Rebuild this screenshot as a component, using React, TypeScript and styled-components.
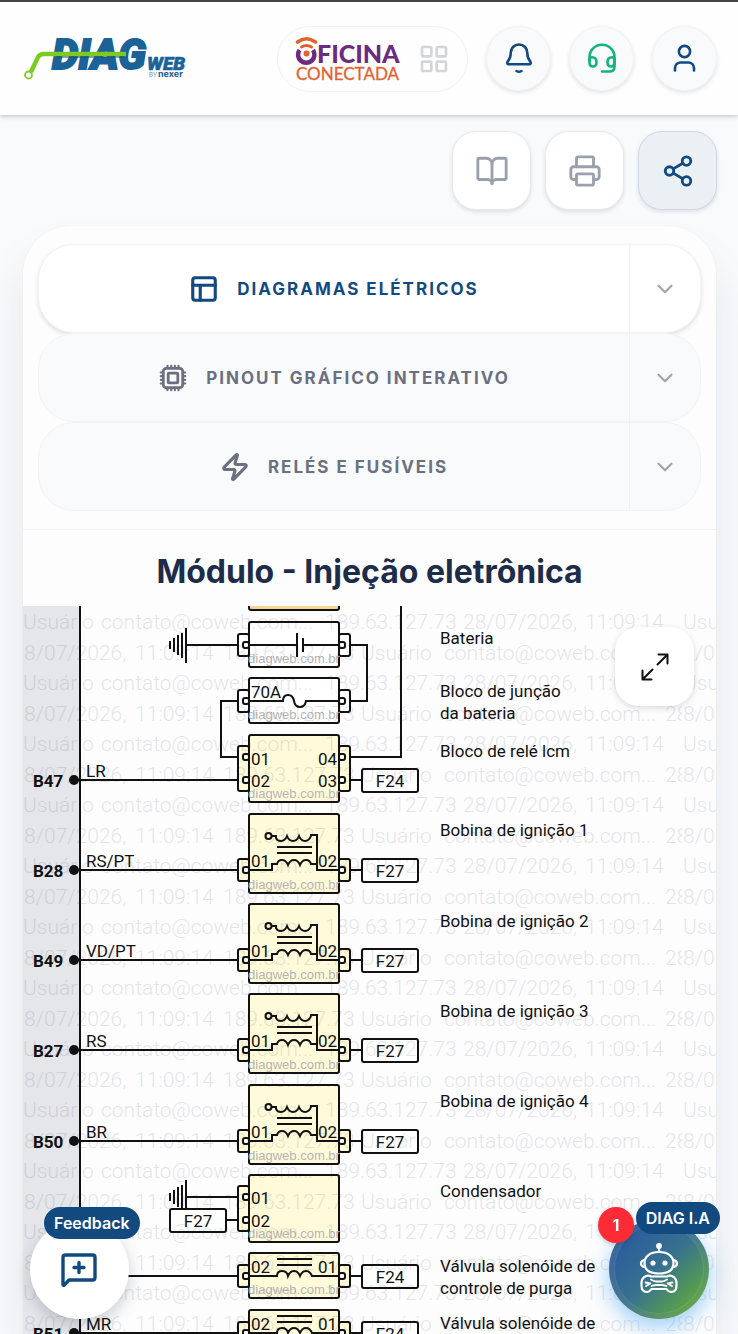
import React from "react";
import styled, { createGlobalStyle, css } from "styled-components";
import { BookOpen, ChevronDown, LayoutGrid, PanelsTopLeft, Printer, Share2, Zap } from "lucide-react";

const navy = "#124a80";
const ui = `Inter, "Open Sans", sans-serif`;

const GlobalStyle = createGlobalStyle`
  * { box-sizing: border-box; }
  body { margin: 0; background: #f8fafc; font-family: ${ui}; }
  button { font: inherit; color: inherit; padding: 0; cursor: pointer; }
`;

const Page = styled.div`
  display: flex;
  flex-direction: column;
  height: 100vh;
  overflow: hidden;
  border-top: 2px solid #45434b;
`;

const Header = styled.header`
  display: flex;
  align-items: center;
  justify-content: space-between;
  flex: none;
  height: 113px;
  padding: 0 21px 0 24px;
  background: #fefefe;
  box-shadow: 0 2px 4px rgba(0, 0, 0, 0.18);
`;

const HomeLink = styled.a`
  display: block;
  height: 44px;
`;

const HeaderActions = styled.div`
  display: flex;
  align-items: center;
  gap: 18px;
`;

const BrandPill = styled.button`
  display: flex;
  align-items: center;
  gap: 17px;
  height: 66px;
  padding: 0 17px;
  border: 1px solid #f1f2f5;
  border-radius: 33px;
  background: #fefefe;
`;

const RoundButton = styled.button<{ $tone: string }>`
  display: grid;
  place-items: center;
  width: 65px;
  height: 65px;
  border: 1px solid #f1f3f6;
  border-radius: 50%;
  background: #f8fafc;
  color: ${(p) => p.$tone};
  box-shadow: 0 2px 4px rgba(30, 41, 59, 0.12);
`;

const Toolbar = styled.div`
  display: flex;
  justify-content: flex-end;
  gap: 14px;
  flex: none;
  padding: 16px 21px;
`;

const ToolButton = styled.button<{ $active?: boolean }>`
  display: grid;
  place-items: center;
  width: 79px;
  height: 79px;
  border: 1px solid #e7e9ee;
  border-radius: 24px;
  background: #fff;
  color: #9aa0ae;
  box-shadow: 0 2px 4px rgba(30, 41, 59, 0.12);
  ${(p) =>
    p.$active &&
    css`
      border-color: #cdd9e4;
      background: #ebf0f5;
      color: ${navy};
    `}
`;

const Card = styled.main`
  display: flex;
  flex-direction: column;
  flex: 1;
  min-height: 0;
  margin: 0 22px 0 23px;
  border-radius: 48px 48px 0 0;
  background: #fdfdfe;
  box-shadow: 0 32px 48px rgba(30, 41, 59, 0.09), 0 0 2px rgba(30, 41, 59, 0.06);
`;

const Tabs = styled.nav`
  display: flex;
  flex-direction: column;
  flex: none;
  padding: 18px 15px;
  border-bottom: 1px solid #eff1f4;
`;

const TabRow = styled.div<{ $active?: boolean }>`
  display: flex;
  height: 89px;
  border: 1px solid #f1f3f6;
  border-radius: 36px;
  background: #f9fafc;
  color: #6b7080;
  ${(p) =>
    p.$active &&
    css`
      background: #fff;
      color: ${navy};
      box-shadow: 0 2px 4px rgba(30, 41, 59, 0.14);
    `}
`;

const TabButton = styled.button`
  display: flex;
  flex: 1;
  align-items: center;
  justify-content: center;
  gap: 18px;
  border: 0;
  background: none;
  font-size: 17px;
  font-weight: 700;
  letter-spacing: 2px;
`;

const TabToggle = styled.button`
  display: grid;
  place-items: center;
  width: 71px;
  border: 0;
  border-left: 1px solid #f0f2f5;
  background: none;
  color: #a0a4b0;
`;

const Title = styled.h1`
  flex: none;
  margin: 0;
  padding: 22px 0 14px;
  color: #1c2c49;
  font-size: 32px;
  line-height: 40px;
  font-weight: 700;
  text-align: center;
`;

const Viewport = styled.section`
  position: relative;
  flex: 1;
  min-height: 0;
  overflow: hidden;
`;

const DiagramSvg = styled.svg`
  display: block;
  width: 100%;
  font-family: Roboto, sans-serif;
  font-size: 17px;
  fill: #111;
`;

const ExpandButton = styled.button`
  position: absolute;
  top: 21px;
  right: 22px;
  display: grid;
  place-items: center;
  width: 79px;
  height: 79px;
  border: 0;
  border-radius: 24px;
  background: #fff;
  color: #111;
  box-shadow: 0 2px 6px rgba(30, 41, 59, 0.16);
`;

const Floating = styled.div<{ $side: "left" | "right" }>`
  position: fixed;
  bottom: 15px;
  ${(p) => (p.$side === "left" ? "left: 30px;" : "right: 29px;")}
`;

const FeedbackButton = styled.button`
  display: grid;
  place-items: center;
  width: 99px;
  height: 99px;
  border: 0;
  border-radius: 50%;
  background: #fff;
  color: ${navy};
  box-shadow: 0 6px 16px rgba(30, 41, 59, 0.22);
`;

const AssistantButton = styled.button`
  display: grid;
  place-items: center;
  width: 100px;
  height: 100px;
  border: 0;
  border-radius: 50%;
  background: linear-gradient(135deg, #2c5f9c 20%, #37718f 50%, #5da640 85%);
  color: #fff;
  box-shadow: 0 8px 22px rgba(56, 160, 240, 0.5), inset 0 0 0 5px rgba(20, 60, 80, 0.1), inset 0 0 0 6px rgba(255, 255, 255, 0.1);
`;

const Tag = styled.span<{ $side: "left" | "right" }>`
  position: absolute;
  height: 32px;
  padding: 0 10px;
  border-radius: 16px;
  background: ${navy};
  color: #fff;
  font-size: 16px;
  line-height: 32px;
  font-weight: 600;
  white-space: nowrap;
  ${(p) => (p.$side === "left" ? "left: 14px; top: -13px;" : "right: -11px; top: -17px;")}
`;

const Count = styled.span`
  position: absolute;
  left: -11px;
  top: -12px;
  width: 36px;
  height: 36px;
  border-radius: 50%;
  background: #fb2c36;
  color: #fff;
  font-size: 16px;
  line-height: 36px;
  font-weight: 700;
  text-align: center;
  box-shadow: 0 2px 4px rgba(30, 41, 59, 0.2);
`;

const stroke = { fill: "none", stroke: "currentColor", strokeLinecap: "round", strokeLinejoin: "round" } as const;

const DiagLogo = () => (
  <svg width="166" height="44" viewBox="24 36 166 44" role="img" aria-label="DIAGweb by nexer">
    <g fill="#1b6299" stroke="#1b6299" fontFamily="Roboto, sans-serif" fontStyle="italic" fontWeight="900">
      <text x="52" y="68" fontSize="42" strokeWidth="1.800">DIAG</text>
      <text x="147" y="69" fontSize="19" strokeWidth="0.600">WEB</text>
    </g>
    <path d="M31 71 L38 56 Q40 53 44 53 H126" fill="none" stroke="#7ccb22" strokeWidth="4.500" />
    <path d="M56 56 H124" stroke="#1a4f6b" strokeWidth="1" />
    <circle cx="28.500" cy="74" r="3.500" fill="#fff" stroke="#7ccb22" strokeWidth="1.800" />
    <text x="149" y="76" fontSize="6" fontFamily="Inter, sans-serif" fill="#6d8fa8">BY</text>
    <text x="158" y="76" fontSize="9" fontFamily="Inter, sans-serif" fontWeight="700" fill="#1b5a8c">nexer</text>
  </svg>
);

const OficinaLogo = () => (
  <svg width="106" height="48" viewBox="295 34 106 48" role="img" aria-label="Oficina Conectada">
    <g fill="none" strokeWidth="4">
      <path d="M299.500 49 A8.200 8.200 0 1 0 313 49" stroke="#6c2a80" strokeWidth="4.500" />
      <path d="M297.500 41 Q306.500 34.500 315.500 41" stroke="#e2622e" strokeWidth="3.600" strokeLinecap="round" />
      <path d="M301.500 46 Q306.500 43 311.500 46" stroke="#e2622e" strokeWidth="3" strokeLinecap="round" />
    </g>
    <circle cx="306.500" cy="52.500" r="3" fill="#e2622e" />
    <text x="317" y="62" fontFamily="Lato, sans-serif" fontSize="25" fontWeight="900" fill="#6c2a80">FICINA</text>
    <text x="296" y="79" fontFamily="Lato, sans-serif" fontSize="17" fill="#e2622e" stroke="#e2622e" strokeWidth="0.300">CONECTADA</text>
  </svg>
);

const BellIcon = () => (
  <svg width="34" height="34" viewBox="502 41 34 34" {...stroke} strokeWidth="2.600">
    <path d="M519 43.500c-5 0-8.300 3.800-8.300 8.600 0 4.600-1.400 6.700-3 8.500-.8 1-.4 2.700.9 2.700h20.800c1.300 0 1.700-1.700.9-2.700-1.600-1.800-3-3.900-3-8.500 0-4.800-3.300-8.600-8.300-8.600Z" />
    <path d="M516.500 70q2.500 1.600 5 0" />
  </svg>
);

const HeadsetIcon = () => (
  <svg width="34" height="34" viewBox="585 41 34 34" {...stroke} strokeWidth="2.600">
    <path d="M589.500 60v-4.200a12.500 12 0 0 1 25 0V65.500q0 5-5 5H602" />
    <path d="M589.500 58.500q0-2.200 2.400-2.200 4.600 0 4.600 4.700 0 4.500-3.500 4.500t-3.500-4Z" />
    <path d="M614.500 58.500q0-2.200-2.400-2.200-4.600 0-4.600 4.700 0 4.500 3.500 4.500t3.500-4Z" />
  </svg>
);

const UserIcon = () => (
  <svg width="34" height="34" viewBox="668 41 34 34" {...stroke} strokeWidth="2.600">
    <circle cx="684.500" cy="50.500" r="5.600" />
    <path d="M675 69.500v-2.500a5.500 5.500 0 0 1 5.500-5.500h8a5.500 5.500 0 0 1 5.500 5.500v2.500" />
  </svg>
);

const ChipIcon = () => (
  <svg width="30" height="30" viewBox="0 0 30 30" {...stroke} strokeWidth="2.800">
    <rect x="5.300" y="5.300" width="19.400" height="19.400" rx="3" />
    <rect x="10.200" y="10.200" width="9.600" height="9.600" rx="0.800" />
    <path strokeWidth="2.200" d="M9.500 2.800v2M13.200 2.800v2M16.800 2.800v2M20.500 2.800v2M9.500 25.200v2M13.200 25.200v2M16.800 25.200v2M20.500 25.200v2M2.800 9.500h2M2.800 13.200h2M2.800 16.800h2M2.800 20.500h2M25.200 9.500h2M25.200 13.200h2M25.200 16.800h2M25.200 20.500h2" />
  </svg>
);

const ExpandIcon = () => (
  <svg width="30" height="30" viewBox="0 0 30 30" {...stroke} strokeWidth="2">
    <path d="M17.500 12.500 27.500 2.500M18.500 2.500h9v9M12.500 17.500 2.500 27.500M2.500 18.500v9h9" />
  </svg>
);

const CommentIcon = () => (
  <svg width="40" height="40" viewBox="60 1250 40 40" {...stroke} strokeWidth="3.400">
    <path d="M63 1284.500v-27q0-2.500 2.500-2.500h27q2.500 0 2.500 2.500v20q0 2.500-2.500 2.500H69l-4.500 4.800q-1.500 1.200-1.500-.300Z" />
    <path d="M79 1262.500v10M74 1267.500h10" />
  </svg>
);

const RobotIcon = () => (
  <svg width="44" height="54" viewBox="637 1242 44 54" {...stroke} strokeWidth="2.200">
    <circle cx="659" cy="1246" r="1.800" fill="currentColor" />
    <path d="M659 1247v5" />
    <path d="M659 1252c-9 0-14.500 4.500-14.500 11s5 10.500 14.500 10.500 14.500-4 14.500-10.500-5.500-11-14.500-11Z" />
    <path d="M644 1260q-3 1-3 3.500t3 3.500M674 1260q3 1 3 3.500t-3 3.500" />
    <circle cx="653" cy="1263" r="1.500" fill="currentColor" />
    <circle cx="665" cy="1263" r="1.500" fill="currentColor" />
    <path d="M646 1276q-5 2-4.500 9 0 7 5 7 3 0 5-3h15q2 3 5 3 5 0 5-7 .500-7-4.500-9-3-1-5 .500h-16q-2-1.500-5-.500Z" />
    <path d="M651 1279.500q3 2 5 2h6q2 0 5-2M651.500 1286q3-1 5-1h5q2 0 5 1" strokeWidth="1.800" />
    <path d="M645.500 1282.500l5 1-4.500 2.500M672.500 1282.500l-5 1 4.500 2.500" strokeWidth="1.800" />
  </svg>
);

/* ---------- wiring diagram ---------- */

const cream = "#fffad9";
const L = 249;
const R = 339;
const wire = { fill: "none", stroke: "#111", strokeWidth: 2 } as const;

const Pin = ({ y, side }: { y: number; side: "l" | "r" }) => (
  <rect x={side === "l" ? L - 6 : R} y={y - 3} width="6" height="6" rx="2" fill="#fff" stroke="#111" strokeWidth="2" />
);

type BlockProps = { top: number; bottom: number; fill?: string; left?: number[]; right?: number[] };

const Block = ({ top, bottom, fill = "#fff", left = [], right = [] }: BlockProps) => (
  <g>
    {left.length > 0 && (
      <rect {...wire} fill={fill} x={L - 11} y={left[0] - 11} width="11" height={left[left.length - 1] - left[0] + 22} rx="2" />
    )}
    {right.length > 0 && (
      <rect {...wire} fill={fill} x={R} y={right[0] - 11} width="11" height={right[right.length - 1] - right[0] + 22} rx="2" />
    )}
    <rect {...wire} fill={fill} x={L} y={top} width={R - L} height={bottom - top} rx="2" />
    {left.map((y) => <Pin key={y} y={y} side="l" />)}
    {right.map((y) => <Pin key={y} y={y} side="r" />)}
    <text x={(L + R) / 2} y={bottom - 4} textAnchor="middle" fontFamily="Liberation Sans, sans-serif" fontSize="13" fill="#b5b5b5">
      diagweb.com.br
    </text>
  </g>
);

const Fuse = ({ x, y, name }: { x: number; y: number; name: string }) => (
  <g>
    <rect {...wire} fill="#fff" x={x} y={y - 11} width="56" height="23" rx="2" />
    <text x={x + 28} y={y + 7} textAnchor="middle">{name}</text>
  </g>
);

const Ground = ({ y }: { y: number }) => (
  <path {...wire} d={`M238 ${y}H186M186 ${y - 17}v35M182 ${y - 12}v25M178 ${y - 10}v20M174 ${y - 7}v14M170 ${y - 4}v8`} />
);

const Terminal = ({ y, name, color }: { y: number; name?: string; color?: string }) => (
  <g>
    <path {...wire} d={`M74 ${y}H238`} />
    <circle cx="74" cy={y} r="5" />
    {name && <text x="33" y={y + 7} fontWeight="700">{name}</text>}
    {color && <text x="86" y={y - 3}>{color}</text>}
  </g>
);

const PinLabels = ({ y, left, right }: { y: number; left?: string; right?: string }) => (
  <g>
    {left && <text x={L + 2} y={y}>{left}</text>}
    {right && <text x={R - 2} y={y} textAnchor="end">{right}</text>}
  </g>
);

const IgnitionCoil = ({ y, name, color }: { y: number; name: string; color: string }) => (
  <g>
    <Terminal y={y} name={name} color={color} />
    <Block top={y - 56} bottom={y + 23} fill={cream} left={[y]} right={[y]} />
    <g {...wire}>
      <circle cx="268.500" cy={y - 34} r="3" />
      <path d={`M271 ${y - 34}h5v2q1 3 5 3t6-5q2 5 6 5t6-5q2 5 6 5t6-5v-1h6V${y}H${R}`} />
      <path d={`M277 ${y - 23}h35M277 ${y - 17}h35`} />
      <path d={`M249 ${y}h23v-6h5q1-4 5-4t6 5q2-5 6-5t6 5q2-5 6-5t5 4h6`} />
    </g>
    <PinLabels y={y - 3} left="01" right="02" />
    <path {...wire} d={`M350 ${y}h12`} />
    <Fuse x={362} y={y} name="F27" />
  </g>
);

const Solenoid = ({ y, name, color }: { y: number; name?: string; color?: string }) => (
  <g>
    <Terminal y={y} name={name} color={color} />
    <Block top={y - 23} bottom={y + 22} fill={cream} left={[y]} right={[y]} />
    <g {...wire}>
      <path d={`M277 ${y - 17}h35M277 ${y - 11}h35`} />
      <path d={`M249 ${y}h28q0-5 5-5t6 5q2-5 6-5t6 5q2-5 6-5t6 5H${R}`} />
    </g>
    <PinLabels y={y - 3} left="02" right="01" />
    <path {...wire} d={`M350 ${y}h12`} />
    <Fuse x={362} y={y} name="F24" />
  </g>
);

const captions: [number, string][] = [
  [644, "Bateria"],
  [697, "Bloco de junção"],
  [719, "da bateria"],
  [757, "Bloco de relé lcm"],
  [836, "Bobina de ignição 1"],
  [927, "Bobina de ignição 2"],
  [1017, "Bobina de ignição 3"],
  [1107, "Bobina de ignição 4"],
  [1197, "Condensador"],
  [1272, "Válvula solenóide de"],
  [1294, "controle de purga"],
  [1329, "Válvula solenóide de"],
];

const Watermark = () => (
  <g fontSize="21" fontWeight="300" fill="#1e1e3c" opacity="0.11">
    <clipPath id="seam">
      <rect x="660" y="606" width="22" height="736" />
    </clipPath>
    {Array.from({ length: 12 }, (_, i) => 629 + i * 61).map((y) => (
      <React.Fragment key={y}>
        <text x="23" y={y}>Usuário</text>
        <text x="101" y={y}>contato@coweb.com...</text>
        <text x="325" y={y}>189.63.127.73</text>
        <text x="463" y={y}>28/07/2026,</text>
        <text x="585" y={y}>11:09:14</text>
        <text x="683" y={y}>Usuário</text>
        <text x="24" y={y + 31}>8/07/2026,</text>
        <text x="135" y={y + 31}>11:09:14</text>
        <text x="223" y={y + 31}>189.63.127.73</text>
        <text x="361" y={y + 31}>Usuário</text>
        <text x="444" y={y + 31}>contato@coweb.com...</text>
        <text x="665" y={y + 31} clipPath="url(#seam)">28</text>
        <text x="683" y={y + 31}>8/07/2026</text>
      </React.Fragment>
    ))}
  </g>
);

const Diagram = () => (
  <DiagramSvg viewBox="23 606 693 736" role="img" aria-label="Diagrama elétrico do módulo de injeção eletrônica">
    <rect x="23" y="606" width="57" height="736" fill="#e5e6ea" />
    <path {...wire} d="M80 606V1342" />

    <rect {...wire} fill="#f8d49c" x={L} y="590" width={R - L} height="20" rx="2" />
    <path {...wire} d="M350 757H401V606M350 645H367V701H350M238 701H221V757H238M350 780h12" />

    <Ground y={645} />
    <Block top={622} bottom={667} left={[645]} right={[645]} />
    <path {...wire} d={`M249 645H297M297 633v24M303 638v14M303 645H${R}`} />

    <Block top={678} bottom={723} left={[701]} right={[701]} />
    <path {...wire} d={`M249 701H283q0-6 5-6t6 6q1 6 6 6t6-6H${R}`} />
    <PinLabels y={698} left="70A" />

    <Terminal y={780} name="B47" color="LR" />
    <Block top={735} bottom={802} fill={cream} left={[757, 780]} right={[757, 780]} />
    <PinLabels y={765} left="01" right="04" />
    <PinLabels y={787} left="02" right="03" />
    <Fuse x={362} y={780} name="F24" />

    <IgnitionCoil y={870} name="B28" color="RS/PT" />
    <IgnitionCoil y={960} name="B49" color="VD/PT" />
    <IgnitionCoil y={1050} name="B27" color="RS" />
    <IgnitionCoil y={1141} name="B50" color="BR" />

    <Ground y={1197} />
    <path {...wire} d="M226 1220h12" />
    <Block top={1175} bottom={1242} fill={cream} left={[1197, 1220]} />
    <PinLabels y={1204} left="01" />
    <PinLabels y={1227} left="02" />
    <Fuse x={170} y={1220} name="F27" />

    <Solenoid y={1276} />
    <Solenoid y={1333} name="B51" color="MR" />

    {captions.map(([y, text]) => (
      <text key={y} x="440" y={y}>{text}</text>
    ))}
    <Watermark />
  </DiagramSvg>
);

const tabs = [
  { label: "DIAGRAMAS ELÉTRICOS", icon: <PanelsTopLeft size={30} strokeWidth={2.5} />, active: true },
  { label: "PINOUT GRÁFICO INTERATIVO", icon: <ChipIcon /> },
  { label: "RELÉS E FUSÍVEIS", icon: <Zap size={30} strokeWidth={2.5} /> },
];

export default function App() {
  return (
    <Page>
      <GlobalStyle />
      <Header>
        <HomeLink href="#" aria-label="DIAGweb"><DiagLogo /></HomeLink>
        <HeaderActions>
          <BrandPill aria-label="Aplicativos Oficina Conectada">
            <OficinaLogo />
            <LayoutGrid size={32} strokeWidth={2} color="#d3d5db" />
          </BrandPill>
          <RoundButton $tone={navy} aria-label="Notificações"><BellIcon /></RoundButton>
          <RoundButton $tone="#12b47c" aria-label="Suporte"><HeadsetIcon /></RoundButton>
          <RoundButton $tone={navy} aria-label="Conta"><UserIcon /></RoundButton>
        </HeaderActions>
      </Header>

      <Toolbar>
        <ToolButton aria-label="Manual"><BookOpen size={34} strokeWidth={2} /></ToolButton>
        <ToolButton aria-label="Imprimir"><Printer size={34} strokeWidth={2} /></ToolButton>
        <ToolButton $active aria-label="Compartilhar"><Share2 size={34} strokeWidth={2} /></ToolButton>
      </Toolbar>

      <Card>
        <Tabs>
          {tabs.map((tab) => (
            <TabRow key={tab.label} $active={tab.active}>
              <TabButton>{tab.icon}{tab.label}</TabButton>
              <TabToggle aria-label={`Abrir ${tab.label}`}><ChevronDown size={26} /></TabToggle>
            </TabRow>
          ))}
        </Tabs>
        <Title>Módulo - Injeção eletrônica</Title>
        <Viewport>
          <Diagram />
          <ExpandButton aria-label="Expandir"><ExpandIcon /></ExpandButton>
        </Viewport>
      </Card>

      <Floating $side="left">
        <FeedbackButton aria-labelledby="feedback-tag"><CommentIcon /></FeedbackButton>
        <Tag id="feedback-tag" $side="left">Feedback</Tag>
      </Floating>
      <Floating $side="right">
        <AssistantButton aria-labelledby="assistant-tag"><RobotIcon /></AssistantButton>
        <Tag id="assistant-tag" $side="right">DIAG I.A</Tag>
        <Count>1</Count>
      </Floating>
    </Page>
  );
}
